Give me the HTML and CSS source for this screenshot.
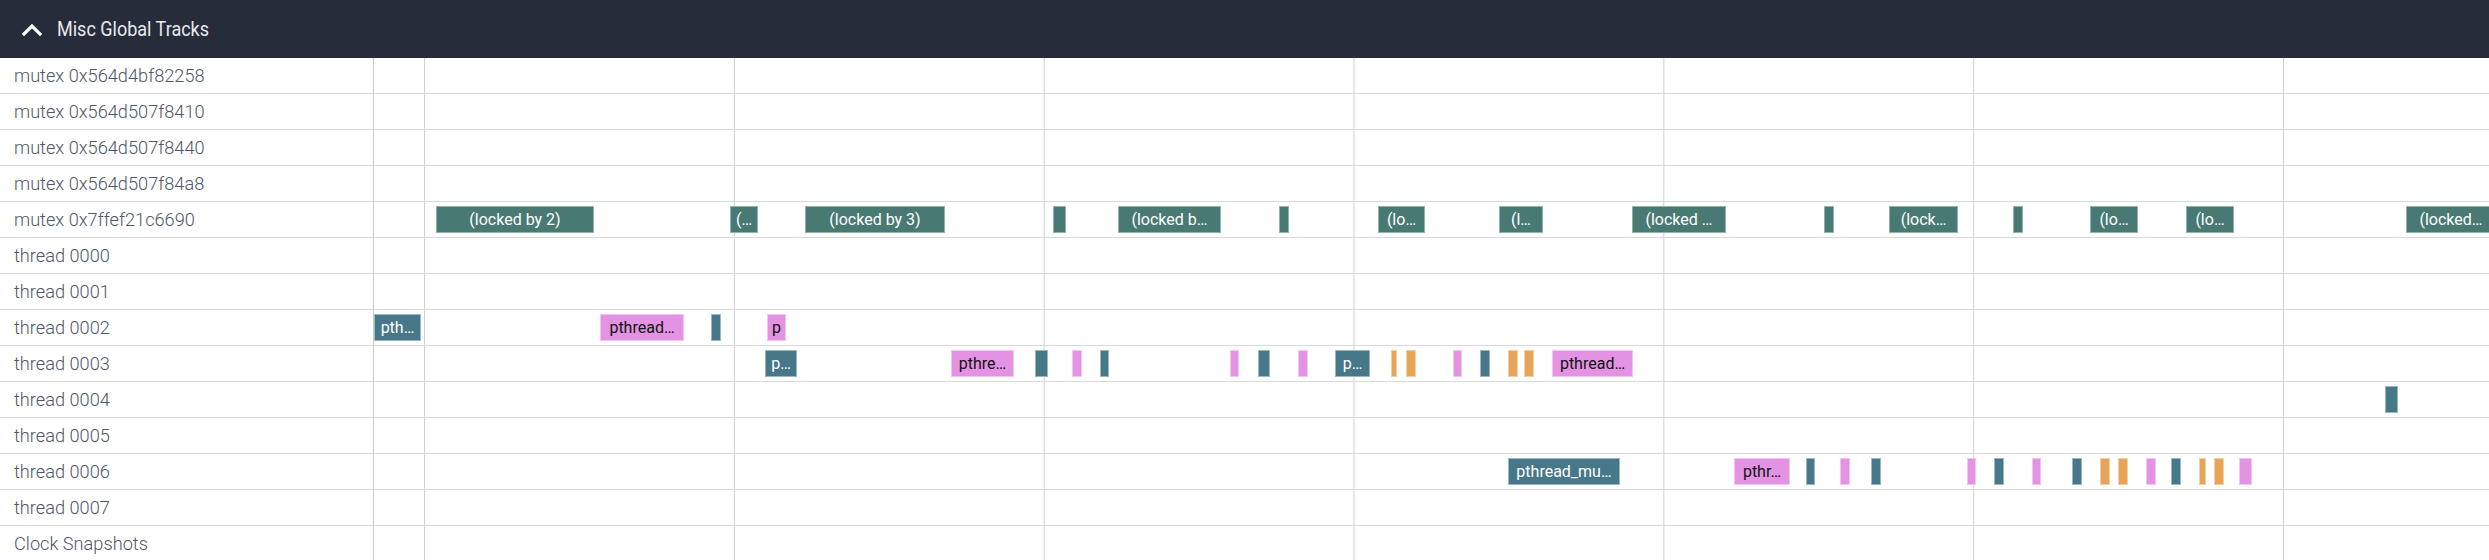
FILE: index.html
```html
<!DOCTYPE html>
<html>
<head>
<meta charset="utf-8">
<link rel="stylesheet" href="styles.css">
</head>
<body>
<div class="panel">
  <div class="header">
    <svg class="chev" width="20" height="14" viewBox="0 0 20 14"><polyline points="2,12 10,4 18,12" fill="none" stroke="#ffffff" stroke-width="3.2" stroke-linecap="square"/></svg>
    <span class="title">Misc Global Tracks</span>
  </div>
  <div class="rows">
    <div class="row"><div class="label">mutex 0x564d4bf82258</div><div class="track"></div></div>
    <div class="row"><div class="label">mutex 0x564d507f8410</div><div class="track"></div></div>
    <div class="row"><div class="label">mutex 0x564d507f8440</div><div class="track"></div></div>
    <div class="row"><div class="label">mutex 0x564d507f84a8</div><div class="track"></div></div>
    <div class="row"><div class="label">mutex 0x7ffef21c6690</div>
      <div class="track">
        <div class="s mx" style="left:62px;width:158px">(locked by 2)</div>
        <div class="s mx" style="left:356px;width:28px">(…</div>
        <div class="s mx" style="left:431px;width:140px">(locked by 3)</div>
        <div class="s mx" style="left:679px;width:13px"></div>
        <div class="s mx" style="left:744px;width:103px">(locked b…</div>
        <div class="s mx" style="left:905px;width:10px"></div>
        <div class="s mx" style="left:1004px;width:47px">(lo…</div>
        <div class="s mx" style="left:1125px;width:44px">(l…</div>
        <div class="s mx" style="left:1258px;width:94px">(locked …</div>
        <div class="s mx" style="left:1450px;width:10px"></div>
        <div class="s mx" style="left:1515px;width:69px">(lock…</div>
        <div class="s mx" style="left:1639px;width:10px"></div>
        <div class="s mx" style="left:1716px;width:48px">(lo…</div>
        <div class="s mx" style="left:1812px;width:48px">(lo…</div>
        <div class="s mx" style="left:2032px;width:90px">(locked…</div>
      </div>
    </div>
    <div class="row"><div class="label">thread 0000</div><div class="track"></div></div>
    <div class="row"><div class="label">thread 0001</div><div class="track"></div></div>
    <div class="row"><div class="label">thread 0002</div>
      <div class="track">
        <div class="s bl" style="left:0px;width:47px">pth…</div>
        <div class="s pk" style="left:226px;width:84px">pthread…</div>
        <div class="s bl" style="left:337px;width:10px"></div>
        <div class="s pk" style="left:393px;width:19px">p</div>
      </div>
    </div>
    <div class="row"><div class="label">thread 0003</div>
      <div class="track">
        <div class="s bl" style="left:391px;width:32px">p…</div>
        <div class="s pk" style="left:577px;width:63px">pthre…</div>
        <div class="s bl" style="left:661px;width:13px"></div>
        <div class="s pk" style="left:698px;width:10px"></div>
        <div class="s bl" style="left:726px;width:9px"></div>
        <div class="s pk" style="left:856px;width:9px"></div>
        <div class="s bl" style="left:884px;width:12px"></div>
        <div class="s pk" style="left:924px;width:10px"></div>
        <div class="s bl" style="left:961px;width:35px">p…</div>
        <div class="s or" style="left:1017px;width:6px"></div>
        <div class="s or" style="left:1032px;width:10px"></div>
        <div class="s pk" style="left:1079px;width:9px"></div>
        <div class="s bl" style="left:1106px;width:10px"></div>
        <div class="s or" style="left:1134px;width:10px"></div>
        <div class="s or" style="left:1150px;width:10px"></div>
        <div class="s pk" style="left:1178px;width:81px">pthread…</div>
      </div>
    </div>
    <div class="row"><div class="label">thread 0004</div>
      <div class="track">
        <div class="s bl" style="left:2011px;width:13px"></div>
      </div>
    </div>
    <div class="row"><div class="label">thread 0005</div><div class="track"></div></div>
    <div class="row"><div class="label">thread 0006</div>
      <div class="track">
        <div class="s bl" style="left:1134px;width:112px">pthread_mu…</div>
        <div class="s pk" style="left:1360px;width:56px">pthr…</div>
        <div class="s bl" style="left:1432px;width:9px"></div>
        <div class="s pk" style="left:1466px;width:10px"></div>
        <div class="s bl" style="left:1497px;width:10px"></div>
        <div class="s pk" style="left:1593px;width:9px"></div>
        <div class="s bl" style="left:1620px;width:10px"></div>
        <div class="s pk" style="left:1658px;width:9px"></div>
        <div class="s bl" style="left:1698px;width:10px"></div>
        <div class="s or" style="left:1726px;width:10px"></div>
        <div class="s or" style="left:1744px;width:10px"></div>
        <div class="s pk" style="left:1772px;width:10px"></div>
        <div class="s bl" style="left:1797px;width:10px"></div>
        <div class="s or" style="left:1825px;width:7px"></div>
        <div class="s or" style="left:1840px;width:10px"></div>
        <div class="s pk" style="left:1865px;width:13px"></div>
      </div>
    </div>
    <div class="row"><div class="label">thread 0007</div><div class="track"></div></div>
    <div class="row"><div class="label">Clock Snapshots</div><div class="track"></div></div>
  </div>
</div>
</body>
</html>
```
FILE: styles.css
```css
html, body {
  margin: 0;
  padding: 0;
  background: #ffffff;
  overflow: hidden;
}
body {
  width: 2489px;
  height: 560px;
  font-family: Roboto, "Liberation Sans", sans-serif;
}
.panel {
  display: flex;
  flex-direction: column;
  width: 2489px;
}
.header {
  height: 58px;
  background: #272c3a;
  display: flex;
  align-items: center;
  padding-left: 22px;
  box-sizing: border-box;
  gap: 15px;
}
.chev {
  display: block;
  margin-top: -1px;
}
.title {
  color: #e8eaee;
  font-size: 20px;
  font-weight: 400;
  line-height: 1;
  transform: scaleX(0.9);
  transform-origin: left center;
}
.rows {
  display: flex;
  flex-direction: column;
}
.row {
  display: flex;
  height: 36px;
  box-sizing: border-box;
  border-bottom: 1px solid #d9d9dc;
}
.label {
  width: 374px;
  flex: none;
  box-sizing: border-box;
  border-right: 1px solid #c9cbd5;
  padding-left: 14px;
  display: flex;
  align-items: center;
  font-size: 18.2px;
  font-weight: 300;
  color: #4f5665;
  white-space: nowrap;
}
.track {
  flex: 1;
  position: relative;
  overflow: hidden;
  background-image: linear-gradient(to right, #cfd0d5 0, #cfd0d5 1px, transparent 1px);
  background-size: 309.83px 100%;
  background-position: 50px 0;
  background-repeat: repeat-x;
}
.s {
  position: absolute;
  top: 4px;
  height: 27px;
  box-sizing: border-box;
  font-size: 16px;
  line-height: 27px;
  text-align: center;
  white-space: nowrap;
  overflow: hidden;
}
.mx {
  background: #487a73;
  color: #ffffff;
  box-shadow: inset 0 0 0 1px #8fb3ad;
}
.bl {
  background: #477889;
  color: #ffffff;
  box-shadow: inset 0 0 0 1px #9bb7c1;
}
.pk {
  background: #e492e3;
  color: #111111;
  box-shadow: inset 0 0 0 1px #f2c6f1;
}
.or {
  background: #e8a456;
  box-shadow: inset 0 0 0 1px #f3cfa4;
}
```
